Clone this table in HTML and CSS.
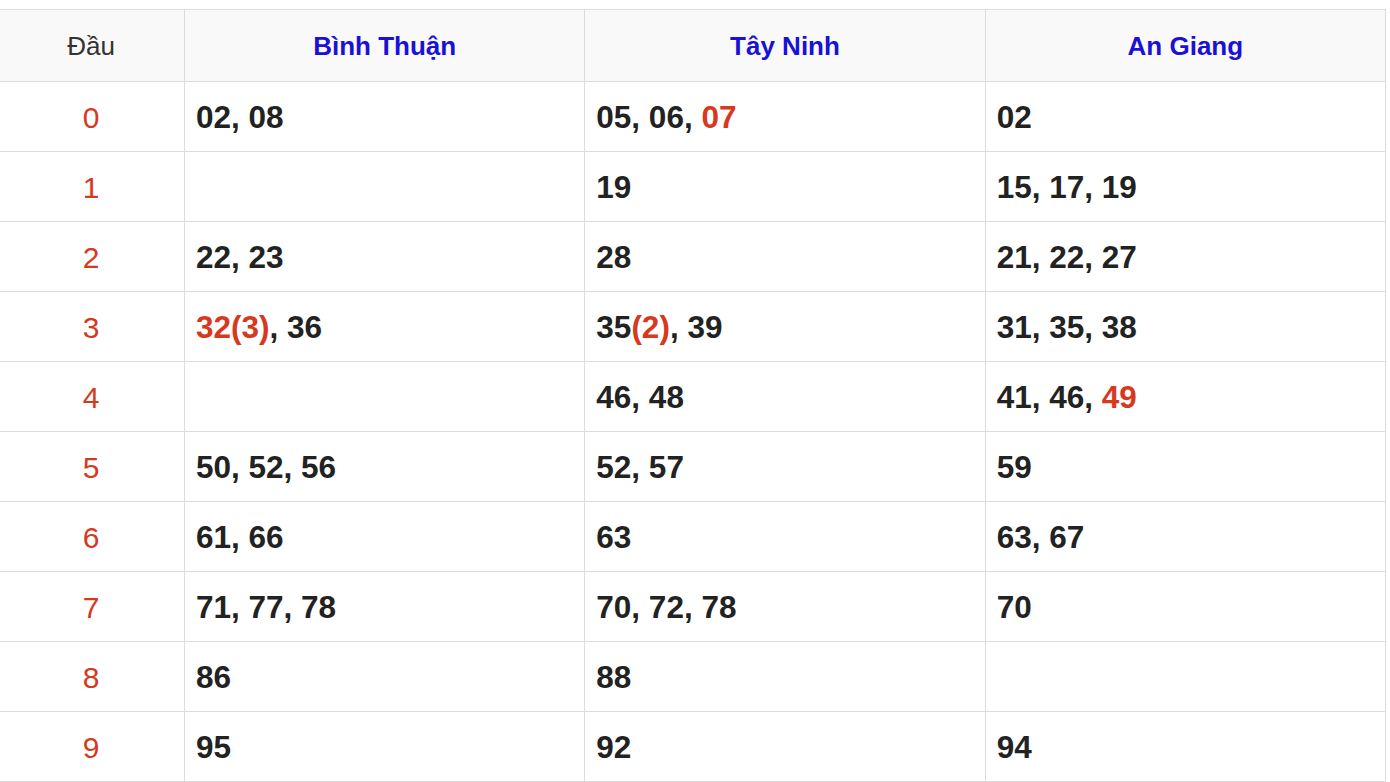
FILE: index.html
```html
<!DOCTYPE html>
<html lang="vi">
<head>
<meta charset="utf-8">
<link rel="stylesheet" href="styles.css">
</head>
<body>
<div class="wrap">
<table class="loto">
  <thead>
    <tr>
      <th class="c-head">Đầu</th>
      <th class="c-prov">Bình Thuận</th>
      <th class="c-prov">Tây Ninh</th>
      <th class="c-prov">An Giang</th>
    </tr>
  </thead>
  <tbody>
    <tr><td class="c-idx">0</td><td>02, 08</td><td>05, 06, <span class="hl">07</span></td><td>02</td></tr>
    <tr><td class="c-idx">1</td><td></td><td>19</td><td>15, 17, 19</td></tr>
    <tr><td class="c-idx">2</td><td>22, 23</td><td>28</td><td>21, 22, 27</td></tr>
    <tr><td class="c-idx">3</td><td><span class="hl">32(3)</span>, 36</td><td>35<span class="hl">(2)</span>, 39</td><td>31, 35, 38</td></tr>
    <tr><td class="c-idx">4</td><td></td><td>46, 48</td><td>41, 46, <span class="hl">49</span></td></tr>
    <tr><td class="c-idx">5</td><td>50, 52, 56</td><td>52, 57</td><td>59</td></tr>
    <tr><td class="c-idx">6</td><td>61, 66</td><td>63</td><td>63, 67</td></tr>
    <tr><td class="c-idx">7</td><td>71, 77, 78</td><td>70, 72, 78</td><td>70</td></tr>
    <tr><td class="c-idx">8</td><td>86</td><td>88</td><td></td></tr>
    <tr><td class="c-idx">9</td><td>95</td><td>92</td><td>94</td></tr>
  </tbody>
</table>
</div>
</body>
</html>
```
FILE: styles.css
```css
html, body {
  margin: 0;
  padding: 0;
  background: #ffffff;
}
.wrap {
  padding-top: 9px;
  margin-left: -1px;
}
.loto {
  width: 1387px;
  border-collapse: collapse;
  table-layout: fixed;
  font-family: "Liberation Sans", Arial, Helvetica, sans-serif;
}
.loto th, .loto td {
  border: 1px solid #dcdcdc;
  padding: 2px 11px 0;
  vertical-align: middle;
}
.loto thead tr {
  height: 72px;
}
.loto tbody tr {
  height: 70px;
}
.loto th {
  background: #f9f9f9;
  font-size: 26px;
  text-align: center;
}
.loto th.c-head {
  width: 160px;
  padding-right: 13px;
  font-weight: normal;
  color: #333333;
}
.c-prov {
  font-weight: bold;
  color: #1b10d6;
}
.loto td {
  font-size: 31.5px;
  font-weight: bold;
  color: #222222;
  text-align: left;
}
.loto td.c-idx {
  padding-right: 13px;
  font-size: 30px;
  font-weight: normal;
  color: #d6391e;
  text-align: center;
}
.hl {
  color: #d6391e;
}
```
